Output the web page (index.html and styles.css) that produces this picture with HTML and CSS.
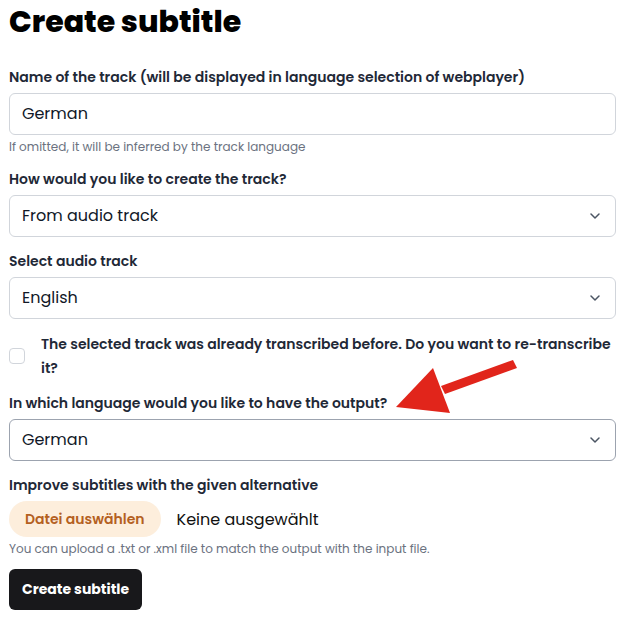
FILE: index.html
```html
<!DOCTYPE html>
<html lang="en">
<head>
<meta charset="utf-8">
<title>Create subtitle</title>
<link rel="stylesheet" href="styles.css">
</head>
<body>
<main class="page">
  <h1 class="title">Create subtitle</h1>
  <form class="form">
    <div class="field">
      <label class="label">Name of the track (will be displayed in language selection of webplayer)</label>
      <div class="control">German</div>
      <p class="hint">If omitted, it will be inferred by the track language</p>
    </div>
    <div class="field">
      <label class="label">How would you like to create the track?</label>
      <div class="control select">From audio track
        <svg class="chev" viewBox="0 0 20 20" width="20" height="20"><path d="M6 8l4 4 4-4" fill="none" stroke="#4b5563" stroke-width="1.5" stroke-linecap="round" stroke-linejoin="round"/></svg>
      </div>
    </div>
    <div class="field">
      <label class="label">Select audio track</label>
      <div class="control select">English
        <svg class="chev" viewBox="0 0 20 20" width="20" height="20"><path d="M6 8l4 4 4-4" fill="none" stroke="#4b5563" stroke-width="1.5" stroke-linecap="round" stroke-linejoin="round"/></svg>
      </div>
    </div>
    <div class="check-row">
      <span class="checkbox"></span>
      <span class="check-text">The selected track was already transcribed before. Do you want to re-transcribe it?</span>
    </div>
    <div class="field">
      <label class="label">In which language would you like to have the output?</label>
      <div class="control select focus">German
        <svg class="chev" viewBox="0 0 20 20" width="20" height="20"><path d="M6 8l4 4 4-4" fill="none" stroke="#4b5563" stroke-width="1.5" stroke-linecap="round" stroke-linejoin="round"/></svg>
      </div>
    </div>
    <div class="field">
      <label class="label">Improve subtitles with the given alternative</label>
      <div class="file-row">
        <span class="file-btn">Datei auswählen</span>
        <span class="file-name">Keine ausgewählt</span>
      </div>
      <p class="hint">You can upload a .txt or .xml file to match the output with the input file.</p>
    </div>
    <div class="actions">
      <button type="button" class="submit">Create subtitle</button>
    </div>
  </form>
  <svg class="arrow" viewBox="0 0 628 619" width="628" height="619">
    <polygon points="513,360 517,368 445,394 441,386" fill="#e1251b"/>
    <polygon points="396,407 433,368 450,413" fill="#e1251b"/>
  </svg>
</main>
</body>
</html>
```
FILE: styles.css
```css
* { box-sizing: border-box; }
html, body { margin: 0; padding: 0; background: #fff; }
body {
  font-family: "Poppins", "Inter", "Liberation Sans", sans-serif;
  color: #1f2937;
}
.page {
  position: relative;
  width: 628px;
  height: 619px;
  padding: 0 12px 0 9px;
  overflow: hidden;
}
.title {
  margin: 0;
  padding-top: 4px;
  font-size: 30px;
  line-height: 36px;
  font-weight: 800;
  color: #000;
  letter-spacing: 0;
}
.form { display: flex; flex-direction: column; margin-top: 27px; }
.field { display: flex; flex-direction: column; }
.field + .field { margin-top: 14px; }
.check-row + .field { margin-top: 13px; }
.label {
  font-size: 14px;
  line-height: 20px;
  font-weight: 600;
  color: #1f2937;
}
.control {
  margin-top: 6px;
  height: 42px;
  border: 1px solid #d1d5db;
  border-radius: 6px;
  padding: 0 12px;
  font-size: 16px;
  line-height: 40px;
  color: #111827;
  display: flex;
  align-items: center;
  justify-content: space-between;
}
.control.focus { border-color: #9ca3af; }
.chev { flex: none; margin-right: -2px; }
.hint {
  margin: 4px 0 0;
  font-size: 12px;
  line-height: 16px;
  color: #6b7280;
}
.check-row {
  margin-top: 13px;
  display: flex;
  align-items: center;
  gap: 16px;
}
.checkbox {
  flex: none;
  width: 16px;
  height: 16px;
  border: 1px solid #d1d5db;
  border-radius: 4px;
}
.check-text {
  font-size: 14px;
  line-height: 24px;
  font-weight: 600;
  color: #1f2937;
}
.file-row {
  margin-top: 6px;
  display: flex;
  align-items: center;
  gap: 16px;
}
.file-btn {
  height: 36px;
  padding: 0 16px;
  border-radius: 18px;
  background: #fdeedc;
  color: #b4601f;
  font-size: 14px;
  font-weight: 600;
  line-height: 36px;
}
.file-name { font-size: 16px; color: #111; }
.actions { margin-top: 12px; }
.submit {
  height: 41px;
  padding: 0 13px;
  border: 0;
  border-radius: 6px;
  background: #18181b;
  color: #fff;
  font-family: inherit;
  font-size: 14px;
  font-weight: 700;
}
.arrow { position: absolute; left: 0; top: 0; pointer-events: none; }
```
